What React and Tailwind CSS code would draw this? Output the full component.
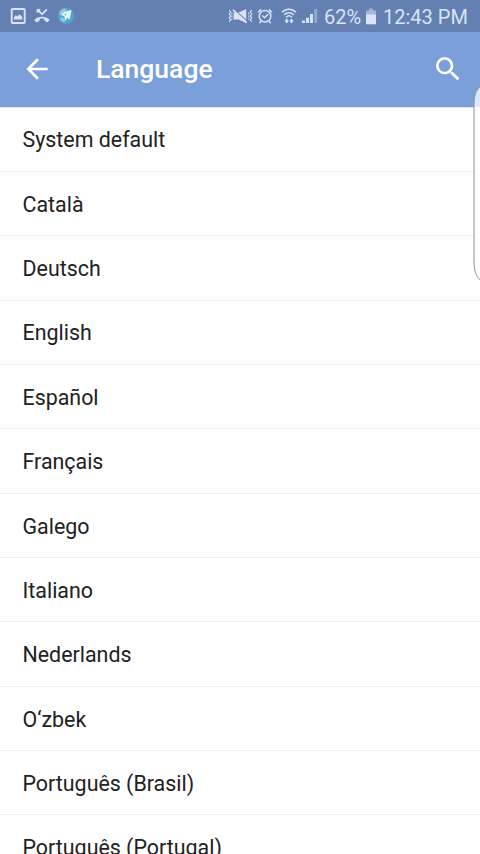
import { useState } from 'react'

const languages = [
  { id: 'system', name: 'System default' },
  { id: 'ca', name: 'Català' },
  { id: 'de', name: 'Deutsch' },
  { id: 'en', name: 'English' },
  { id: 'es', name: 'Español' },
  { id: 'fr', name: 'Français' },
  { id: 'gl', name: 'Galego' },
  { id: 'it', name: 'Italiano' },
  { id: 'nl', name: 'Nederlands' },
  { id: 'uz', name: 'O‘zbek' },
  { id: 'pt-br', name: 'Português (Brasil)' },
  { id: 'pt-pt', name: 'Português (Portugal)' },
]

function PictureIcon() {
  return (
    <svg width="16" height="16" viewBox="0 0 16 16" fill="none">
      <rect x="1.7" y="1" width="13" height="14" rx="1" stroke="currentColor" strokeWidth="1.9" />
      <path d="M3.9 11.4V9.2l2-2 1.5 1.2 2.2-2.2 2.6 2.6v2.6z" fill="currentColor" />
    </svg>
  )
}

function MissedCallIcon() {
  return (
    <svg width="16" height="16" viewBox="0 0 16 16" fill="none">
      <path d="M3.5 4.6V1.8h2.8M3.6 2.1l4.5 4 4.8-4.6" stroke="currentColor" strokeWidth="1.8" />
      <path
        d="M.3 12C4.3 7.6 11.7 7.6 15.7 12l-2.4 2.4-3-1.8v-1.7c-1.5-.4-3.1-.4-4.6 0v1.7l-3 1.8z"
        fill="currentColor"
      />
    </svg>
  )
}

function GlobeIcon() {
  return (
    <svg width="18" height="18" viewBox="0 0 18 18">
      <circle cx="9" cy="9" r="8" fill="#4fa6d3" />
      <path d="M2 5.5L6 1.6l4 .4-3 3.6-3 3.2zM4 10l4 1.5L7.4 16 3.5 13z" fill="#8ccbe3" />
      <path d="M4.2 7.8L8 4.6 14.4 3l-1.6 9.6-2.8-1.8-1.4 3.4-1.2-4.6z" fill="#e3f5fd" />
      <path d="M7.4 7l2.4-.6-1.4 2.8z" fill="#7cc0e2" />
    </svg>
  )
}

function VibrateMuteIcon() {
  return (
    <svg width="25" height="16" viewBox="0 0 25 16" fill="none">
      <path
        d="M1.2 2.2l1.5 1.9-1.5 1.9 1.5 1.9-1.5 1.9 1.5 1.9-1.5 1.9M23.8 2.2l-1.5 1.9 1.5 1.9-1.5 1.9 1.5 1.9-1.5 1.9 1.5 1.9"
        stroke="currentColor"
        strokeWidth="1.1"
      />
      <path d="M3.9 4.6v7.6M20.8 4.4v7.4" stroke="currentColor" strokeWidth="1" strokeDasharray="2 1" />
      <path d="M5.6 4.6h5L18.2 1v14l-7.6-3.6h-5z" fill="currentColor" />
      <path d="M6.2 1.4L19.4 13.4" stroke="#647fb2" strokeWidth="1.2" />
      <path d="M5 1.8L18.6 14.6" stroke="currentColor" strokeWidth="1.7" />
    </svg>
  )
}

function AlarmIcon() {
  return (
    <svg width="16" height="16" viewBox="0 0 16 16" fill="none" stroke="currentColor">
      <circle cx="8" cy="8.2" r="5.8" strokeWidth="1.5" />
      <path d="M1 4.2l3.2-3M15 4.2l-3.2-3M4 13.3l-1.6 2M12 13.3l1.6 2" strokeWidth="1.5" />
      <path d="M5.3 7.4L7.6 9.8l3.5-3.6" strokeWidth="1.4" />
    </svg>
  )
}

function WifiIcon() {
  return (
    <svg width="16" height="16" viewBox="0 0 16 16" fill="none">
      <path
        d="M1 4.2c4-4 10-4 14 0M3.1 6.7c2.8-2.7 7-2.7 9.8 0M5.2 9.1c1.6-1.5 4-1.5 5.6 0"
        stroke="currentColor"
        strokeWidth="1.5"
      />
      <path d="M3.4 12.6h1.3v-1.8h2v1.8H8L5.7 15.4zM8.2 13.2l2.3-2.8 2.3 2.8h-1.3V15h-2v-1.8z" fill="currentColor" />
    </svg>
  )
}

function SignalIcon() {
  return (
    <svg width="16" height="16" viewBox="0 0 16 16" fill="currentColor">
      <path d="M0 12.4h3V15H0zM4 9.8h3V15H4zM8 6h3v9H8z" />
      <path d="M12.2 1h3v14h-3z" opacity=".4" />
    </svg>
  )
}

function BatteryIcon() {
  return (
    <svg width="12" height="17" viewBox="0 0 12 17" fill="currentColor">
      <path d="M4 .5h4v2h3V7H1V2.5h3z" opacity=".55" />
      <path d="M1 6.5h10v9.8H1z" />
    </svg>
  )
}

function StatusBar() {
  return (
    <div className="flex h-8 shrink-0 items-center justify-between bg-[#647fb2] pl-2.5 pr-3 text-[#d9e4f8]">
      <div className="flex items-center">
        <PictureIcon />
        <div className="ml-2">
          <MissedCallIcon />
        </div>
        <div className="ml-[7px]">
          <GlobeIcon />
        </div>
      </div>
      <div className="flex items-center">
        <VibrateMuteIcon />
        <div className="ml-1">
          <AlarmIcon />
        </div>
        <div className="ml-2">
          <WifiIcon />
        </div>
        <div className="ml-[5px]">
          <SignalIcon />
        </div>
        <span className="ml-1.5 w-[37px] whitespace-nowrap pt-0.5 text-[20px] leading-6">62%</span>
        <div className="ml-1">
          <BatteryIcon />
        </div>
        <span className="ml-1.5 w-[85px] whitespace-nowrap pt-0.5 text-[20px] leading-6">12:43 PM</span>
      </div>
    </div>
  )
}

function AppBar() {
  return (
    <header className="flex h-[74.5px] shrink-0 items-center bg-[#7b9fd9] pl-[21px] pr-4 text-white">
      <button aria-label="Back">
        <svg width="32" height="32" viewBox="0 0 24 24" fill="currentColor">
          <path d="M20 11H7.83l5.59-5.59L12 4l-8 8 8 8 1.41-1.41L7.83 13H20v-2z" />
        </svg>
      </button>
      <h1 className="ml-[43px] flex-1 text-[26.5px] font-medium leading-8">Language</h1>
      <button aria-label="Search">
        <svg width="32" height="32" viewBox="0 0 24 24" fill="currentColor">
          <path d="M15.5 14h-.79l-.28-.27A6.471 6.471 0 0 0 16 9.5 6.5 6.5 0 1 0 9.5 16c1.61 0 3.09-.59 4.23-1.57l.27.28v.79l5 4.99L20.49 19l-4.99-5zm-6 0C7.01 14 5 11.99 5 9.5S7.01 5 9.5 5 14 7.01 14 9.5 11.99 14 9.5 14z" />
        </svg>
      </button>
    </header>
  )
}

export default function App() {
  const [selected, setSelected] = useState('system')

  return (
    <div className="relative flex h-[854px] w-[480px] flex-col overflow-hidden bg-white font-['Roboto',sans-serif]">
      <StatusBar />
      <AppBar />
      <ul className="min-h-0 flex-1 overflow-hidden border-t border-[#dbe4f2]">
        {languages.map((lang) => (
          <li key={lang.id} className="h-[64.36px] border-b border-[#f0f0f0]">
            <button
              aria-pressed={lang.id === selected}
              onClick={() => setSelected(lang.id)}
              className="flex h-full w-full items-center pl-[22.5px] pt-[2.5px] text-left text-[21.4px] text-[#212121]"
            >
              {lang.name}
            </button>
          </li>
        ))}
      </ul>

      {/* edge panel handle, sits over the bar and the list */}
      <svg className="absolute right-0 top-[84px]" width="8" height="200" viewBox="0 0 8 200" fill="none">
        <path d="M8 3C4 6 2 12 2 20v158c0 8 2 14 6 18z" fill="#fff" />
        <path d="M8 3C4 6 2 12 2 20v3h6z" fill="#dce8fb" />
        <path d="M8 3C4 6 2 12 2 20v158c0 8 2 14 6 18" stroke="#8c8f96" strokeWidth="1" />
      </svg>
    </div>
  )
}
